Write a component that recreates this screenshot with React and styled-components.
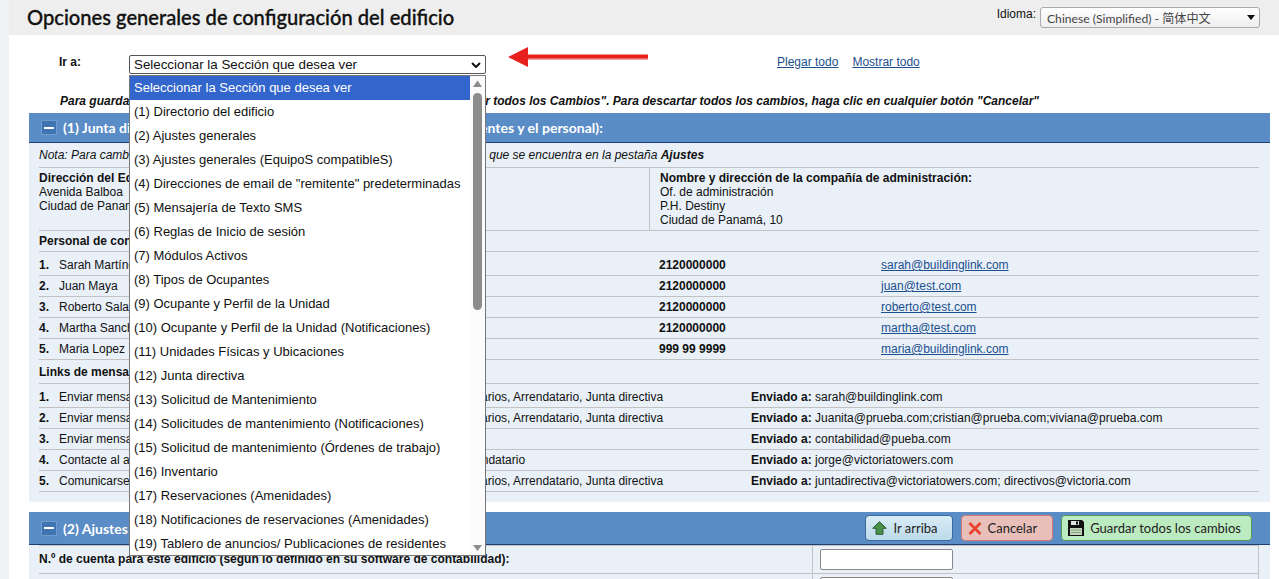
import React from 'react';
import styled, { createGlobalStyle } from 'styled-components';

const GlobalStyle = createGlobalStyle`
    html, body {
        margin: 0;
        height: 579px;
        overflow: hidden;
        background-color: #eff1f5;
        font-family: "Liberation Sans", Arial, sans-serif;
        font-size: 12px;
        color: #111;
    }
`;

const Page = styled.div`
    margin-left: 9px;
    height: 579px;
    overflow: hidden;
    background-color: #fff;
`;

const TopBar = styled.div`
    height: 35px;
    padding: 0 19px 0 18px;
    display: flex;
    justify-content: space-between;
    background-color: #eee;
`;

const Title = styled.h1`
    margin: 0;
    font-family: Lato, sans-serif;
    font-size: 20.15px;
    font-weight: 500;
    line-height: 34px;
    color: #111;
    -webkit-text-stroke: 0.3px #111;
`;

const Language = styled.div`
    display: flex;
    align-items: flex-start;
    padding-top: 7px;
    gap: 4px;
    span { line-height: 15px; }
`;

const LanguageSelect = styled.div`
    box-sizing: border-box;
    width: 220px;
    height: 21px;
    padding: 0 4px 0 6px;
    display: flex;
    align-items: center;
    justify-content: space-between;
    border: 1px solid #aaa;
    border-radius: 3px;
    background: linear-gradient(#fff, #eee);
    font-family: Lato, "Noto Sans CJK SC", sans-serif;
    font-size: 12.15px;
    color: #444;
`;

const Content = styled.div`
    padding: 0 9px 0 20px;
`;

const JumpRow = styled.div`
    display: flex;
    align-items: flex-start;
    margin-top: 20px;
    padding-left: 30px;
`;

const JumpLabel = styled.div`
    width: 70px;
    line-height: 15px;
    font-weight: bold;
    font-size: 12px;
`;

const JumpSelect = styled.div`
    position: relative;
    width: 357px;
    z-index: 5;
`;

const JumpField = styled.div`
    box-sizing: border-box;
    height: 19px;
    padding: 0 4px;
    display: flex;
    align-items: center;
    justify-content: space-between;
    border: 1px solid #555;
    border-radius: 2px;
    font-size: 13.33px;
    background-color: #fff;
`;

const Popup = styled.div`
    position: absolute;
    top: 20px;
    left: 0;
    box-sizing: border-box;
    width: 357px;
    height: 481px;
    overflow: hidden;
    display: flex;
    border: 1px solid #767676;
    background-color: #fff;
`;

const OptionList = styled.div`
    flex: 1;
    min-width: 0;
`;

const Option = styled.div`
    height: 24px;
    padding-left: 4px;
    line-height: 24px;
    white-space: nowrap;
    font-size: 13px;
    background-color: ${props => (props.$selected ? '#3366cc' : 'transparent')};
    color: ${props => (props.$selected ? '#fff' : '#111')};
`;

const ScrollTrack = styled.div`
    width: 15px;
    display: flex;
    flex-direction: column;
    align-items: center;
    background-color: #fbfbfb;

    svg { display: block; flex: none; }
`;

const ScrollThumb = styled.div`
    width: 9px;
    height: 217px;
    margin-bottom: auto;
    border-radius: 5px;
    background-color: #8c8c8c;
`;

const RedArrow = styled.svg`
    flex: none;
    display: block;
    margin: -8px 0 0 22px;
`;

const CollapseLinks = styled.div`
    display: flex;
    gap: 14px;
    margin-left: 129px;
    line-height: 15px;
`;

const TextLink = styled.a`
    color: #1b4f8e;
    text-decoration: underline;
`;

const SaveNote = styled.div`
    margin: 20px 0 5px 31px;
    line-height: 14px;
    font-weight: bold;
    font-style: italic;
    white-space: nowrap;
`;

const Section = styled.section`
    margin-bottom: 10px;
`;

const SectionBar = styled.div`
    height: ${props => props.$height}px;
    padding: 0 18px 0 12px;
    display: flex;
    align-items: center;
    gap: 6px;
    border-bottom: 1px solid #1d3f73;
    background-color: #5a8cc6;
`;

const CollapseBox = styled.div`
    box-sizing: border-box;
    width: 16px;
    height: 15px;
    display: flex;
    align-items: center;
    justify-content: center;
    border: 1px solid #6f9bd0;
    background-color: #3f73b2;

    &::before {
        content: '';
        width: 10px;
        height: 2px;
        background-color: #fff;
    }
`;

const SectionTitle = styled.div`
    font-family: Lato, sans-serif;
    font-size: 14px;
    font-weight: bold;
    color: #fff;
    white-space: nowrap;
`;

const BarButtons = styled.div`
    margin-left: auto;
    display: flex;
    gap: 8px;
`;

const BarButton = styled.button`
    box-sizing: border-box;
    height: 26px;
    padding: 0 ${props => props.$right}px 0 6px;
    display: flex;
    align-items: center;
    gap: 6px;
    border: 1px solid ${props => props.$border};
    border-radius: 4px;
    background: ${props => props.$background};
    font-family: Lato, sans-serif;
    font-size: 13px;
    color: #222;

    svg { display: block; }
`;

const SectionBody = styled.div`
    padding: 0 11px 10px 10px;
    background-color: #e9f0f8;
`;

const Note = styled.div`
    height: 24px;
    line-height: 24px;
    border-bottom: 1px solid #c2c2c2;
    font-style: italic;
    white-space: nowrap;
`;

const AddressRow = styled.div`
    height: 62px;
    display: grid;
    grid-template-columns: 610px 1fr;
    border-bottom: 1px solid #c2c2c2;
`;

const AddressCell = styled.div`
    padding-top: 3px;
    line-height: 14px;
    & + & {
        padding-left: 10px;
        border-left: 1px solid #c2c2c2;
    }
`;

const Heading = styled.div`
    height: ${props => props.$height}px;
    line-height: ${props => props.$line}px;
    border-bottom: 1px solid #c2c2c2;
    font-weight: bold;
    white-space: nowrap;
`;

const Row = styled.div`
    display: grid;
    grid-template-columns: ${props => props.$columns};
    align-items: center;
    height: 20px;
    padding-top: ${props => (props.$first ? '3px' : '0')};
    border-bottom: 1px solid #c2c2c2;
    white-space: nowrap;
`;

const Num = styled.b``;
const Phone = styled.b``;

const FieldRow = styled.div`
    display: grid;
    grid-template-columns: 773px 1fr;
    border-top: 1px solid #c2c2c2;
    border-bottom: 1px solid #c2c2c2;

    & + & { border-top: none; }
`;

const FieldLabel = styled.div`
    line-height: 27px;
    font-weight: bold;
    white-space: nowrap;
`;

const FieldCell = styled.div`
    height: 27px;
    padding: 3px 0 0 7px;
    box-sizing: border-box;
    border-left: 1px solid #c2c2c2;
    border-right: 1px solid #c2c2c2;
`;

const TextInput = styled.input`
    display: block;
    box-sizing: border-box;
    width: 133px;
    height: 21px;
    border: 1px solid #888;
    border-radius: 2px;
    background-color: #fff;
`;

const options = [
    'Seleccionar la Sección que desea ver',
    '(1) Directorio del edificio',
    '(2) Ajustes generales',
    '(3) Ajustes generales (EquipoS compatibleS)',
    '(4) Direcciones de email de "remitente" predeterminadas',
    '(5) Mensajería de Texto SMS',
    '(6) Reglas de Inicio de sesión',
    '(7) Módulos Activos',
    '(8) Tipos de Ocupantes',
    '(9) Ocupante y Perfil de la Unidad',
    '(10) Ocupante y Perfil de la Unidad (Notificaciones)',
    '(11) Unidades Físicas y Ubicaciones',
    '(12) Junta directiva',
    '(13) Solicitud de Mantenimiento',
    '(14) Solicitudes de mantenimiento (Notificaciones)',
    '(15) Solicitud de mantenimiento (Órdenes de trabajo)',
    '(16) Inventario',
    '(17) Reservaciones (Amenidades)',
    '(18) Notificaciones de reservaciones (Amenidades)',
    '(19) Tablero de anuncios/ Publicaciones de residentes',
];

const contacts = [
    ['Sarah Martínez', '2120000000', 'sarah@buildinglink.com'],
    ['Juan Maya', '2120000000', 'juan@test.com'],
    ['Roberto Salazar', '2120000000', 'roberto@test.com'],
    ['Martha Sanchez', '2120000000', 'martha@test.com'],
    ['Maria Lopez', '999 99 9999', 'maria@buildinglink.com'],
];

const audience = 'Usuarios, Propietarios, Arrendatario, Junta directiva';

const messageLinks = [
    ['Enviar mensaje a la Administración', audience, 'sarah@buildinglink.com'],
    ['Enviar mensaje a Mantenimiento', audience, 'Juanita@prueba.com;cristian@prueba.com;viviana@prueba.com'],
    ['Enviar mensaje a Contabilidad', '', 'contabilidad@pueba.com'],
    ['Contacte al administrador', 'Propietarios, Arrendatario', 'jorge@victoriatowers.com'],
    ['Comunicarse con la Junta', audience, 'juntadirectiva@victoriatowers.com; directivos@victoria.com'],
];

const contactColumns = '20px 600px 222px 1fr';
const linkColumns = '20px 330px 362px 1fr';

const UpIcon = () => (
    <svg width="15" height="14" viewBox="0 0 15 14">
        <path d="M7.5 .7 14.3 7.3H11V13.3H4V7.3H.7Z" fill="#4a8f47" stroke="#2d5e3a" />
    </svg>
);

const CrossIcon = () => (
    <svg width="14" height="13" viewBox="0 0 14 13">
        <path d="M1.500 1 12.500 12M12.500 1 1.500 12" stroke="#e8402a" strokeWidth="2.600" />
    </svg>
);

const FloppyIcon = () => (
    <svg width="16" height="16" viewBox="0 0 16 16">
        <path d="M0 0H14L16 2V16H0Z" fill="#111" />
        <rect x="3" y="1" width="8" height="4" fill="#dfe6df" />
        <rect x="8" y="1.500" width="2" height="3" fill="#111" />
        <rect x="2" y="8" width="12" height="7" fill="#c3d6bd" />
        <path d="M3 10H13M3 12.500H13" stroke="#8aa184" />
    </svg>
);

export default function App() {
    return (
        <Page>
            <GlobalStyle />
            <TopBar>
                <Title>Opciones generales de configuración del edificio</Title>
                <Language>
                    <span>Idioma:</span>
                    <LanguageSelect>
                        Chinese (Simplified) - 简体中文
                        <svg width="8" height="5" viewBox="0 0 8 5"><path d="M0 0H8L4 5Z" fill="#111" /></svg>
                    </LanguageSelect>
                </Language>
            </TopBar>
            <Content>
                <JumpRow>
                    <JumpLabel>Ir a:</JumpLabel>
                    <JumpSelect>
                        <JumpField>
                            Seleccionar la Sección que desea ver
                            <svg width="10" height="6" viewBox="0 0 10 6">
                                <path d="M1 1 5 5 9 1" fill="none" stroke="#111" strokeWidth="2" />
                            </svg>
                        </JumpField>
                        <Popup>
                            <OptionList>
                                {options.map((option, i) => (
                                    <Option key={option} $selected={i === 0}>{option}</Option>
                                ))}
                            </OptionList>
                            <ScrollTrack>
                                <svg width="15" height="17" viewBox="0 0 15 17"><path d="M3 11 7.500 4.500 12 11Z" fill="#8c8c8c" /></svg>
                                <ScrollThumb />
                                <svg width="15" height="13" viewBox="0 0 15 13"><path d="M3 3H12L7.500 9Z" fill="#8c8c8c" /></svg>
                            </ScrollTrack>
                        </Popup>
                    </JumpSelect>
                    <RedArrow width="140" height="22" viewBox="0 0 140 22">
                        <path d="M20 9H140V13H20Z" fill="#f2a5a0" />
                        <path d="M0 10 20 0V7.500H140V11.500H20V20Z" fill="#e8201e" />
                    </RedArrow>
                    <CollapseLinks>
                        <TextLink>Plegar todo</TextLink>
                        <TextLink>Mostrar todo</TextLink>
                    </CollapseLinks>
                </JumpRow>
                <SaveNote>
                    Para guardar los cambios realizados haga clic en cualquier botón "Guardar todos los Cambios". Para descartar todos los cambios, haga clic en cualquier botón "Cancelar"
                </SaveNote>
                <Section>
                    <SectionBar $height={29}>
                        <CollapseBox />
                        <SectionTitle>(1) Junta directiva, e información de contactos (visible para los residentes y el personal):</SectionTitle>
                    </SectionBar>
                    <SectionBody>
                        <Note>
                            Nota: Para cambiar la información de esta sección utilice el módulo correspondiente que se encuentra en la pestaña <b>Ajustes</b>
                        </Note>
                        <AddressRow>
                            <AddressCell>
                                <b>Dirección del Edificio:</b><br />
                                Avenida Balboa<br />
                                Ciudad de Panamá, 10
                            </AddressCell>
                            <AddressCell>
                                <b>Nombre y dirección de la compañía de administración:</b><br />
                                Of. de administración<br />
                                P.H. Destiny<br />
                                Ciudad de Panamá, 10
                            </AddressCell>
                        </AddressRow>
                        <Heading $height={20} $line={20}>Personal de contacto:</Heading>
                        {contacts.map((contact, i) => (
                            <Row key={contact[2]} $columns={contactColumns} $first={i === 0}>
                                <Num>{i + 1}.</Num>
                                <span>{contact[0]}</span>
                                <Phone>{contact[1]}</Phone>
                                <span><TextLink>{contact[2]}</TextLink></span>
                            </Row>
                        ))}
                        <Heading $height={23} $line={24}>Links de mensajes:</Heading>
                        {messageLinks.map((link, i) => (
                            <Row key={link[0]} $columns={linkColumns} $first={i === 0}>
                                <Num>{i + 1}.</Num>
                                <span>{link[0]}</span>
                                <span>{link[1]}</span>
                                <span><b>Enviado a:</b> {link[2]}</span>
                            </Row>
                        ))}
                    </SectionBody>
                </Section>
                <Section>
                    <SectionBar $height={32}>
                        <CollapseBox />
                        <SectionTitle>(2) Ajustes generales</SectionTitle>
                        <BarButtons>
                            <BarButton $right={14} $border="#3d6a9e" $background="linear-gradient(#d8ecf6, #bcdae9)"><UpIcon />Ir arriba</BarButton>
                            <BarButton $right={15} $border="#cc7a75" $background="#e8bfb9"><CrossIcon />Cancelar</BarButton>
                            <BarButton $right={10} $border="#4f9a58" $background="#bcebc0"><FloppyIcon />Guardar todos los cambios</BarButton>
                        </BarButtons>
                    </SectionBar>
                    <SectionBody>
                        <FieldRow>
                            <FieldLabel>N.º de cuenta para este edificio (según lo definido en su software de contabilidad):</FieldLabel>
                            <FieldCell><TextInput /></FieldCell>
                        </FieldRow>
                        <FieldRow>
                            <FieldLabel />
                            <FieldCell><TextInput /></FieldCell>
                        </FieldRow>
                    </SectionBody>
                </Section>
            </Content>
        </Page>
    );
}
